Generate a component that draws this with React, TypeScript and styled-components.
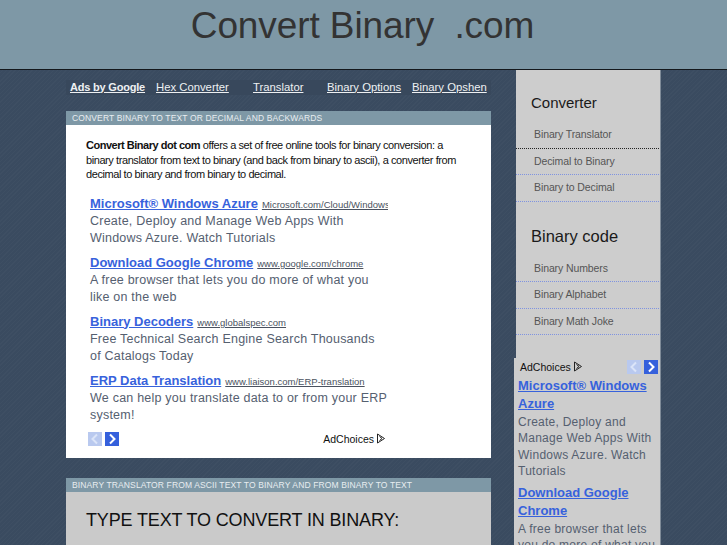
import styled, { createGlobalStyle } from "styled-components";

const GlobalStyle = createGlobalStyle`
  html, body {
    margin: 0;
    padding: 0;
    height: 545px;
    overflow: hidden;
    background-color: #3a4b60;
    background-image: repeating-linear-gradient(
      135deg,
      rgba(255, 255, 255, 0.018) 0 1px,
      transparent 1px 3px
    );
    font-family: "Liberation Sans", Arial, sans-serif;
  }
`;

const Header = styled.header`
  height: 69px;
  background-color: #7e98a6;
  border-bottom: 1px solid #14181c;
  display: flex;
  justify-content: center;
`;

const SiteTitle = styled.h1`
  margin: 0 2px 0 0;
  font-size: 37px;
  font-weight: normal;
  line-height: 52px;
  letter-spacing: -0.1px;
  color: #333;
  white-space: pre;
`;

const Page = styled.div`
  width: 595px;
  margin: 0 auto;
  display: flex;
  justify-content: space-between;
`;

const Main = styled.main`
  width: 425px;
  padding-top: 10px;
`;

const TopNav = styled.nav`
  height: 15px;
  box-sizing: border-box;
  padding: 0 0 2px 4px;
  display: flex;
  align-items: center;
  background-color: #38485c;
  margin-bottom: 16px;
`;

const NavLink = styled.a<{ $bold?: boolean; $width: number }>`
  width: ${({ $width }) => $width}px;
  flex: none;
  font-size: ${({ $bold }) => ($bold ? 11 : 11.3)}px;
  letter-spacing: ${({ $bold }) => ($bold ? -0.2 : 0)}px;
  color: #eef0f2;
  text-decoration: underline;
  white-space: nowrap;
  font-weight: ${({ $bold }) => ($bold ? "bold" : "normal")};
`;

const PanelTitle = styled.h2`
  margin: 0;
  height: 14px;
  padding-left: 6px;
  background-color: #7e98a6;
  color: #e8edf0;
  font-size: 8.5px;
  font-weight: normal;
  line-height: 14px;
  letter-spacing: 0.13px;
  white-space: nowrap;
`;

const WhitePanel = styled.section`
  height: 333px;
  background-color: #fff;
  padding: 13px 0 0 20px;
  box-sizing: border-box;
  margin-bottom: 20px;
`;

const Intro = styled.p`
  margin: 0 0 11px;
  width: 375px;
  font-size: 11px;
  line-height: 14.5px;
  letter-spacing: -0.42px;
  color: #111;

  b {
    letter-spacing: -0.48px;
  }
`;

const AdList = styled.div`
  margin-left: 4px;
  width: 299px;
`;

const AdBlock = styled.div`
  margin-bottom: 4px;
`;

const AdHead = styled.div`
  height: 20px;
  line-height: 20px;
  white-space: nowrap;
  width: 298px;
  overflow: hidden;
`;

const AdTitle = styled.a`
  font-size: 13px;
  font-weight: bold;
  color: #3762dc;
  text-decoration: underline;
`;

const AdUrl = styled.a`
  margin-left: 4px;
  font-size: 9.5px;
  color: #4a5260;
  text-decoration: underline;
`;

const AdText = styled.p`
  margin: 0;
  font-size: 12.5px;
  line-height: 17.5px;
  letter-spacing: 0.22px;
  color: #556070;
`;

const AdFooter = styled.div`
  display: flex;
  align-items: center;
  justify-content: space-between;
  width: 298px;
  margin-left: -2px;
  margin-top: 7px;
`;

const ArrowRow = styled.div`
  display: flex;
  gap: 3px;
`;

const ArrowBox = styled.span<{ $off?: boolean }>`
  width: 14px;
  height: 14px;
  display: flex;
  align-items: center;
  justify-content: center;
  background-color: ${({ $off }) => ($off ? "#b9c9ef" : "#3560dc")};
`;

const ChoicesLabel = styled.span`
  display: inline-flex;
  align-items: center;
  gap: 2px;
  font-size: 10.5px;
  color: #111;
`;

const GreyPanel = styled.section`
  height: 60px;
  background-color: #cacaca;
  padding: 18px 0 0 20px;
  box-sizing: border-box;
`;

const GreyHeading = styled.h3`
  margin: 0;
  font-size: 18px;
  font-weight: normal;
  line-height: 20px;
  letter-spacing: -0.15px;
  color: #111;
  white-space: nowrap;
`;

const Sidebar = styled.aside`
  width: 145px;
  height: 475px;
  background-color: #cdcdcd;
  border-right: 1px solid #7f8b98;
  padding-top: 23px;
  box-sizing: border-box;
`;

const SideHeading = styled.h3<{ $large?: boolean }>`
  margin: 0 0 ${({ $large }) => ($large ? 10 : 9)}px 15px;
  font-size: ${({ $large }) => ($large ? 16.5 : 15)}px;
  font-weight: normal;
  line-height: 20px;
  color: #1a1a1a;
`;

const SideList = styled.ul`
  list-style: none;
  margin: 0 0 24px;
  padding: 0;
  width: 143px;
`;

const SideItem = styled.li<{ $dark?: boolean }>`
  height: 26.5px;
  line-height: 25px;
  padding-left: 18px;
  box-sizing: border-box;
  font-size: 10.5px;
  letter-spacing: -0.1px;
  color: #555;
  border-bottom: 1px dotted ${({ $dark }) => ($dark ? "#222" : "#7f93e0")};
`;

const SideAd = styled.div`
  margin: -1px 0 0 -2px;
  background-color: #cdcdcd;
  padding: 0 2px 0 4px;
`;

const SideAdTop = styled.div`
  height: 17px;
  margin-bottom: 2px;
  display: flex;
  align-items: center;
  justify-content: space-between;
  padding-left: 2px;
`;

const SideAdTitle = styled.a`
  display: block;
  font-size: 13px;
  line-height: 18px;
  font-weight: bold;
  color: #3762dc;
  text-decoration: underline;
`;

const SideAdText = styled.p`
  margin: 0 0 5px;
  padding-top: 1px;
  font-size: 12px;
  line-height: 16.3px;
  letter-spacing: 0.25px;
  color: #556070;
`;

function Arrow({ right, off }: { right?: boolean; off?: boolean }) {
  return (
    <ArrowBox $off={off}>
      <svg width="10" height="12" viewBox="0 0 10 12">
        <path
          d={right ? "M3 1.5 L7.5 6 L3 10.5" : "M7 1.5 L2.5 6 L7 10.5"}
          fill="none"
          stroke={off ? "#dbe4f8" : "#fff"}
          strokeWidth="2"
        />
      </svg>
    </ArrowBox>
  );
}

function AdChoices() {
  return (
    <ChoicesLabel>
      AdChoices
      <svg width="10" height="11" viewBox="0 0 10 11">
        <path
          d="M1.5 1 L8.5 5.5 L1.5 10 Z M3.5 3.5 L6 5.5 L3.5 7.5"
          fill="none"
          stroke="#222"
          strokeWidth="1"
        />
      </svg>
    </ChoicesLabel>
  );
}

const ads = [
  {
    title: "Microsoft® Windows Azure",
    url: "Microsoft.com/Cloud/Windows/Azure",
    text: "Create, Deploy and Manage Web Apps With Windows Azure. Watch Tutorials",
  },
  {
    title: "Download Google Chrome",
    url: "www.google.com/chrome",
    text: "A free browser that lets you do more of what you like on the web",
  },
  {
    title: "Binary Decoders",
    url: "www.globalspec.com",
    text: "Free Technical Search Engine Search Thousands of Catalogs Today",
  },
  {
    title: "ERP Data Translation",
    url: "www.liaison.com/ERP-translation",
    text: "We can help you translate data to or from your ERP system!",
  },
];

export default function App() {
  return (
    <>
      <GlobalStyle />
      <Header>
        <SiteTitle>Convert Binary  .com</SiteTitle>
      </Header>
      <Page>
        <Main>
          <TopNav>
            <NavLink $bold $width={86}>Ads by Google</NavLink>
            <NavLink $width={97}>Hex Converter</NavLink>
            <NavLink $width={74}>Translator</NavLink>
            <NavLink $width={85}>Binary Options</NavLink>
            <NavLink $width={75}>Binary Opshen</NavLink>
          </TopNav>
          <PanelTitle>CONVERT BINARY TO TEXT OR DECIMAL AND BACKWARDS</PanelTitle>
          <WhitePanel>
            <Intro>
              <b>Convert Binary dot com</b> offers a set of free online tools for
              binary conversion: a binary translator from text to binary (and back
              from binary to ascii), a converter from decimal to binary and from
              binary to decimal.
            </Intro>
            <AdList>
              {ads.map((ad) => (
                <AdBlock key={ad.title}>
                  <AdHead>
                    <AdTitle>{ad.title}</AdTitle>
                    <AdUrl>{ad.url}</AdUrl>
                  </AdHead>
                  <AdText>{ad.text}</AdText>
                </AdBlock>
              ))}
              <AdFooter>
                <ArrowRow>
                  <Arrow off />
                  <Arrow right />
                </ArrowRow>
                <AdChoices />
              </AdFooter>
            </AdList>
          </WhitePanel>
          <PanelTitle>BINARY TRANSLATOR FROM ASCII TEXT TO BINARY AND FROM BINARY TO TEXT</PanelTitle>
          <GreyPanel>
            <GreyHeading>TYPE TEXT TO CONVERT IN BINARY:</GreyHeading>
          </GreyPanel>
        </Main>
        <Sidebar>
          <SideHeading>Converter</SideHeading>
          <SideList>
            <SideItem $dark>Binary Translator</SideItem>
            <SideItem>Decimal to Binary</SideItem>
            <SideItem>Binary to Decimal</SideItem>
          </SideList>
          <SideHeading $large>Binary code</SideHeading>
          <SideList>
            <SideItem>Binary Numbers</SideItem>
            <SideItem>Binary Alphabet</SideItem>
            <SideItem>Binary Math Joke</SideItem>
          </SideList>
          <SideAd>
            <SideAdTop>
              <AdChoices />
              <ArrowRow>
                <Arrow off />
                <Arrow right />
              </ArrowRow>
            </SideAdTop>
            <SideAdTitle>Microsoft® Windows Azure</SideAdTitle>
            <SideAdText>Create, Deploy and Manage Web Apps With Windows Azure. Watch Tutorials</SideAdText>
            <SideAdTitle>Download Google Chrome</SideAdTitle>
            <SideAdText>A free browser that lets you do more of what you like on the web</SideAdText>
          </SideAd>
        </Sidebar>
      </Page>
    </>
  );
}
